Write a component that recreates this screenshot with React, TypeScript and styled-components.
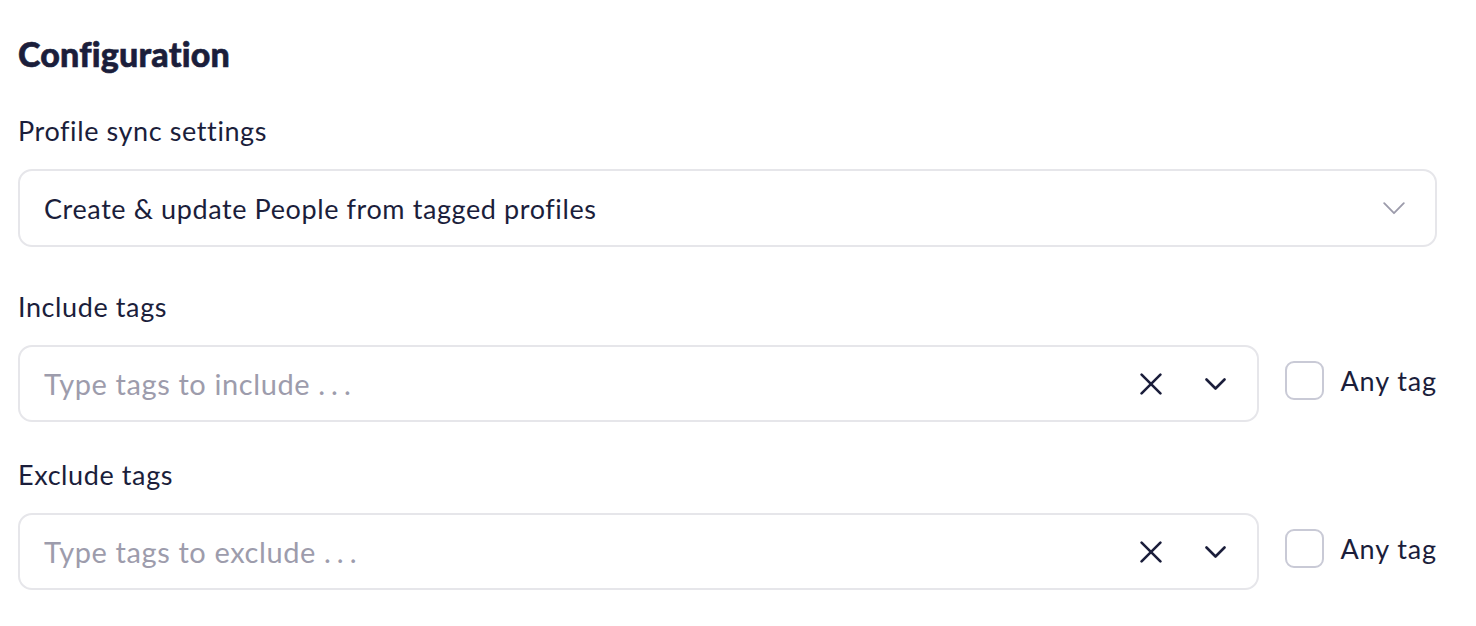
import { createGlobalStyle } from 'styled-components';
import styled from 'styled-components';

const GlobalStyle = createGlobalStyle`
  * {
    box-sizing: border-box;
  }
  body {
    margin: 0;
    background: #ffffff;
    font-family: Lato, 'Noto Sans', sans-serif;
    color: #1b1e3b;
  }
`;

interface TagFieldProps {
  label: string;
  placeholder: string;
  top: number;
}

function SelectChevron() {
  return (
    <svg width="22" height="13" viewBox="0 0 22 13" fill="none">
      <path
        d="M1.2 1.2l9.8 10 9.8-10"
        stroke="#9c9bab"
        strokeWidth="1.8"
        strokeLinecap="round"
        strokeLinejoin="round"
      />
    </svg>
  );
}

function SmallChevron() {
  return (
    <svg width="21" height="12" viewBox="0 0 21 12" fill="none">
      <path
        d="M1.5 1.5l9 9 9-9"
        stroke="#1b1e3b"
        strokeWidth="2.6"
        strokeLinecap="round"
        strokeLinejoin="round"
      />
    </svg>
  );
}

function CloseIcon() {
  return (
    <svg width="22" height="22" viewBox="0 0 22 22" fill="none">
      <path
        d="M1.6 1.6l18.8 18.8M20.4 1.6L1.6 20.4"
        stroke="#1b1e3b"
        strokeWidth="2.6"
        strokeLinecap="round"
      />
    </svg>
  );
}

function TagField({ label, placeholder, top }: TagFieldProps) {
  return (
    <Field $top={top}>
      <Label>{label}</Label>
      <TagRow>
        <Box $height={77} $padRight={31}>
          <Placeholder>
            {placeholder}
            <Dots>...</Dots>
          </Placeholder>
          <Actions>
            <CloseIcon />
            <SmallChevron />
          </Actions>
        </Box>
        <CheckLabel>
          <Checkbox />
          Any tag
        </CheckLabel>
      </TagRow>
    </Field>
  );
}

export default function App() {
  return (
    <>
      <GlobalStyle />
      <Page>
        <Title>Configuration</Title>
        <Field $top={41}>
          <Label>Profile sync settings</Label>
          <Box $height={78} $padRight={30}>
            <Value>Create &amp; update People from tagged profiles</Value>
            <SelectChevron />
          </Box>
        </Field>
        <TagField label="Include tags" placeholder="Type tags to include " top={44} />
        <TagField label="Exclude tags" placeholder="Type tags to exclude " top={37} />
      </Page>
    </>
  );
}

const Page = styled.div`
  width: 1476px;
  padding: 34px 39px 0 18px;
  display: flex;
  flex-direction: column;
`;

const Title = styled.h1`
  margin: 0;
  font-size: 34px;
  line-height: 40px;
  font-weight: 900;
  letter-spacing: 0.2px;
  color: #1b1e3b;
  -webkit-text-stroke: 0.6px #1b1e3b;
`;

const Field = styled.div<{ $top: number }>`
  display: flex;
  flex-direction: column;
  gap: 22px;
  margin-top: ${({ $top }) => $top}px;
`;

const Label = styled.div`
  font-size: 27px;
  line-height: 32px;
  font-weight: 400;
  letter-spacing: 0.6px;
`;

const TagRow = styled.div`
  display: flex;
  align-items: center;
  gap: 26px;
`;

const Box = styled.div<{ $height: number; $padRight: number }>`
  flex: 1 1 auto;
  min-width: 0;
  height: ${({ $height }) => $height}px;
  border: 2px solid #e6e6ea;
  border-radius: 14px;
  display: flex;
  align-items: center;
  padding: 0 ${({ $padRight }) => $padRight}px 0 24px;
`;

const Value = styled.div`
  flex: 1;
  font-size: 27px;
  letter-spacing: 0.6px;
`;

const Placeholder = styled.div`
  flex: 1;
  font-size: 29px;
  letter-spacing: 0.6px;
  color: #9d9cac;
`;

const Dots = styled.span`
  letter-spacing: 6px;
`;

const Actions = styled.div`
  display: flex;
  align-items: center;
  gap: 43px;
`;

const CheckLabel = styled.label`
  display: flex;
  align-items: center;
  gap: 16px;
  margin-top: -6px;
  font-size: 27px;
  letter-spacing: 0.9px;
  white-space: nowrap;
`;

const Checkbox = styled.span`
  width: 39px;
  height: 39px;
  border: 2px solid #c9cad6;
  border-radius: 9px;
`;
